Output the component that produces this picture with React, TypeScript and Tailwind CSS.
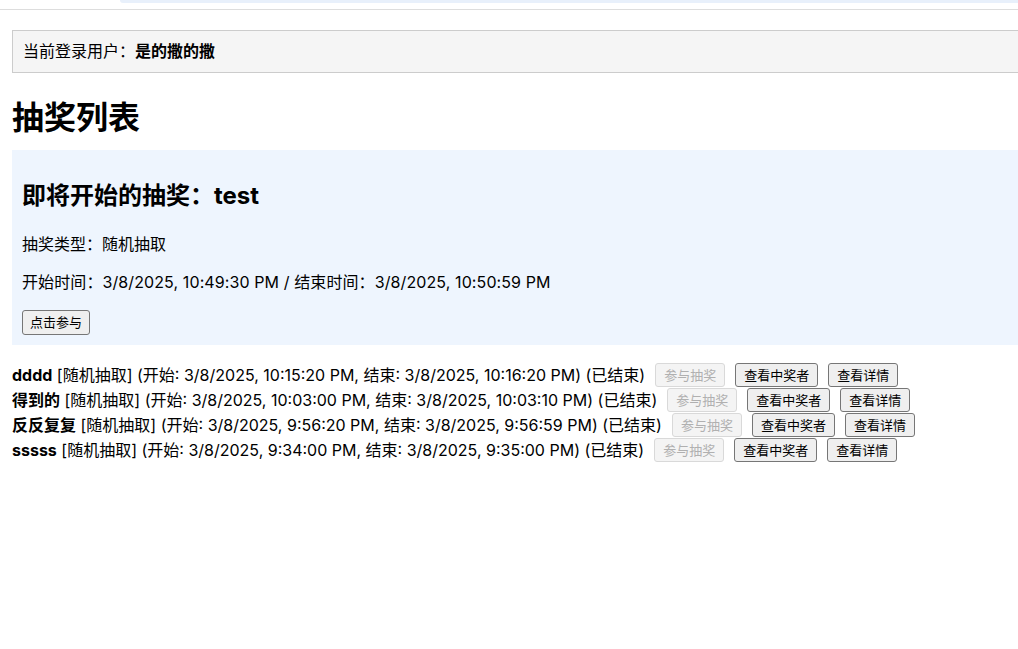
import React from "react";

type Lottery = {
  name: string;
  start: string;
  end: string;
};

const finished: Lottery[] = [
  { name: "dddd", start: "3/8/2025, 10:15:20 PM", end: "3/8/2025, 10:16:20 PM" },
  { name: "得到的", start: "3/8/2025, 10:03:00 PM", end: "3/8/2025, 10:03:10 PM" },
  { name: "反反复复", start: "3/8/2025, 9:56:20 PM", end: "3/8/2025, 9:56:59 PM" },
  { name: "sssss", start: "3/8/2025, 9:34:00 PM", end: "3/8/2025, 9:35:00 PM" },
];

const btn =
  "ml-[10px] px-[8px] py-[3px] text-[13px] leading-[16px] rounded-[3px] border border-[#767676] bg-[#efefef] text-black";
const btnDisabled =
  "ml-[10px] px-[8px] py-[3px] text-[13px] leading-[16px] rounded-[3px] border border-[#d9d9d9] bg-[#f4f4f4] text-[#b0b0b0]";

export default function App() {
  return (
    <div className="min-h-screen bg-white text-black font-['Inter','Noto_Sans_CJK_SC',sans-serif] overflow-hidden">
      {/* remains of the nav bar scrolled off the top */}
      <div className="h-[3px] ml-[120px] bg-[#e8f0fb] rounded-bl-[8px]" />
      <div className="mt-[6px] border-t border-[#dddddd]" />

      <div className="pl-3 pt-[20px]">
        <div className="border border-r-0 border-[#cccccc] bg-[#f5f5f5] px-[10px] py-[10px] text-[16px] leading-[21px]">
          当前登录用户：<span className="font-bold">是的撒的撒</span>
        </div>

        <h1 className="mt-[25px] mb-[12px] text-[32px] leading-[40px] font-bold">抽奖列表</h1>

        <div className="bg-[#eef5fe] pl-[10px] pt-[10px] pb-[10px]">
          <h2 className="mt-[22px] mb-[23px] text-[24px] leading-[28px] font-bold">
            即将开始的抽奖：test
          </h2>
          <p className="text-[16px] leading-[22px] mb-[16px]">抽奖类型：随机抽取</p>
          <p className="text-[16px] leading-[22px] mb-[16px] tracking-[0.1px]">
            开始时间：3/8/2025, 10:49:30 PM / 结束时间：3/8/2025, 10:50:59 PM
          </p>
          <button className="px-[7px] py-[3px] text-[13px] leading-[17px] rounded-[3px] border border-[#767676] bg-[#efefef]">
            点击参与
          </button>
        </div>

        <div className="mt-[17px]">
          {finished.map((l) => (
            <div key={l.name} className="flex items-center h-[25px] text-[16px] whitespace-pre">
              <span className="font-bold">{l.name}</span>
              <span>{` [随机抽取] (开始: ${l.start}, 结束: ${l.end}) (已结束)`}</span>
              <button disabled className={btnDisabled}>
                参与抽奖
              </button>
              <button className={btn}>查看中奖者</button>
              <button className={btn}>查看详情</button>
            </div>
          ))}
        </div>
      </div>
    </div>
  );
}
